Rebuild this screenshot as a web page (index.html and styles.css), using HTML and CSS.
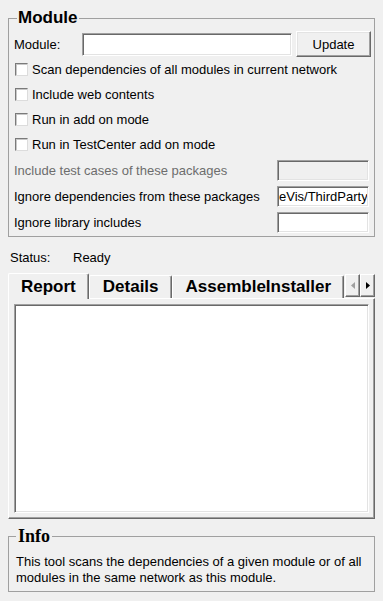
FILE: index.html
```html
<!DOCTYPE html>
<html lang="en">
<head>
  <meta charset="UTF-8">
  <title>Module Dependencies</title>
  <link rel="stylesheet" href="styles.css">
</head>
<body>
  <div class="panel">
    <fieldset class="group module-group">
      <legend>Module</legend>

      <div class="module-row">
        <label class="module-label" for="moduleName">Module:</label>
        <input class="field module-field" type="text" id="moduleName">
        <button class="btn">Update</button>
      </div>

      <label class="check-row"><span class="box"></span>Scan dependencies of all modules in current network</label>
      <label class="check-row"><span class="box"></span>Include web contents</label>
      <label class="check-row"><span class="box"></span>Run in add on mode</label>
      <label class="check-row"><span class="box"></span>Run in TestCenter add on mode</label>

      <div class="field-row disabled">
        <span>Include test cases of these packages</span>
        <input class="field small-field" type="text" disabled>
      </div>
      <div class="field-row">
        <span>Ignore dependencies from these packages</span>
        <input class="field small-field" type="text" value="eVis/ThirdParty">
      </div>
      <div class="field-row">
        <span>Ignore library includes</span>
        <input class="field small-field" type="text">
      </div>
    </fieldset>

    <div class="status">
      <span class="status-label">Status:</span>
      <span id="statusText">Ready</span>
    </div>

    <div class="tabs">
      <div class="tab-bar">
        <div class="tab-strip">
          <div class="tab active">Report</div>
          <div class="tab">Details</div>
          <div class="tab">AssembleInstaller</div>
        </div>
        <div class="tab-scroll">
          <span class="arrow-btn">
            <svg width="4" height="7" viewBox="0 0 4 7"><path d="M4 0 L0 3.5 L4 7 Z" fill="#a0a0a0"/></svg>
          </span>
          <span class="arrow-btn">
            <svg width="4" height="7" viewBox="0 0 4 7"><path d="M0 0 L4 3.5 L0 7 Z" fill="#000"/></svg>
          </span>
        </div>
      </div>
      <div class="tab-pane">
        <div class="report"></div>
      </div>
    </div>

    <fieldset class="group info-group">
      <legend>Info</legend>
      <p>This tool scans the dependencies of a given module or of all modules in the same network as this module.</p>
    </fieldset>
  </div>
</body>
</html>
```

FILE: styles.css
```css
body {
  margin: 0;
  background: #f0f0f0;
  font-family: "Liberation Sans", Arial, sans-serif;
  font-size: 13px;
  color: #000;
}

.panel {
  padding: 8px 8px 0 8px;
}

.group {
  margin: 0;
  min-width: 0;
  border: 1px solid #a0a0a0;
  padding: 3px 3px 1px 5px;
}

.group legend {
  font-weight: bold;
  font-size: 17px;
  line-height: 20px;
  padding: 0 1px;
  margin-left: 3px;
}

.field {
  box-sizing: border-box;
  margin: 0;
  padding: 0 2px;
  font-family: inherit;
  font-size: 13px;
  color: #000;
  background: #fff;
  border: 1px solid;
  border-color: #a0a0a0 #fff #fff #a0a0a0;
  box-shadow: inset 1px 1px #696969, inset -1px -1px #e3e3e3;
  outline: none;
}

.field:disabled {
  background: #f0f0f0;
}

.module-row {
  display: flex;
  align-items: center;
  height: 26px;
}

.module-label {
  width: 68px;
}

.module-field {
  width: 210px;
  height: 23px;
}

.btn {
  box-sizing: border-box;
  width: 75px;
  height: 26px;
  margin-left: 4px;
  font-family: inherit;
  font-size: 13px;
  color: #000;
  background: #f0f0f0;
  border: 1px solid;
  border-color: #fff #696969 #696969 #fff;
  box-shadow: inset -1px -1px #a0a0a0, inset 1px 1px #e3e3e3;
}

.check-row {
  display: flex;
  align-items: center;
  height: 25px;
}

.box {
  box-sizing: border-box;
  width: 13px;
  height: 13px;
  margin-left: 1px;
  margin-right: 4px;
  background: #fff;
  border: 1px solid;
  border-color: #7a7a7a #dcdcdc #dcdcdc #7a7a7a;
  box-shadow: inset 1px 1px #c8c8c8;
}

.field-row {
  display: flex;
  align-items: center;
  justify-content: space-between;
  height: 26px;
}

.field-row.disabled span {
  color: #6d6d6d;
}

.small-field {
  width: 92px;
  height: 21px;
  margin-right: 2px;
  padding: 0 1px;
}

.status {
  display: flex;
  align-items: center;
  height: 20px;
  margin-top: 10px;
  padding-left: 2px;
}

.status-label {
  width: 63px;
}

.tabs {
  margin-top: 6px;
}

.tab-bar {
  display: flex;
  align-items: flex-end;
  height: 25px;
}

.tab-strip {
  display: flex;
  align-items: flex-end;
  flex: 1;
  height: 26px;
  margin-bottom: -1px;
  overflow: hidden;
  position: relative;
  z-index: 1;
}

.tab {
  box-sizing: border-box;
  flex: none;
  height: 23px;
  margin-bottom: 1px;
  padding: 0 12px 0 13px;
  font-weight: bold;
  font-size: 17px;
  line-height: 22px;
  white-space: nowrap;
  border-top: 1px solid #fff;
  border-left: 1px solid #fff;
  border-right: 1px solid #696969;
  border-radius: 2px 2px 0 0;
  box-shadow: inset -1px 0 #a0a0a0;
}

.tab.active {
  height: 26px;
  margin-bottom: 0;
  padding-left: 12px;
  line-height: 26px;
  background: #f0f0f0;
}

.tab-scroll {
  display: flex;
  align-self: flex-end;
  margin-bottom: 1px;
}

.arrow-btn {
  box-sizing: border-box;
  display: flex;
  align-items: center;
  justify-content: center;
  width: 15px;
  height: 23px;
  background: #f0f0f0;
  border: 1px solid;
  border-color: #fff #696969 #696969 #fff;
  box-shadow: inset -1px -1px #a0a0a0;
}

.tab-pane {
  padding: 5px;
  border: 1px solid;
  border-color: #fff #696969 #696969 #fff;
  box-shadow: inset -1px -1px #a0a0a0;
}

.report {
  box-sizing: border-box;
  height: 209px;
  background: #fff;
  border: 1px solid;
  border-color: #a0a0a0 #fff #fff #a0a0a0;
  box-shadow: inset 1px 1px #696969, inset -1px -1px #e3e3e3;
}

.info-group {
  margin-top: 7px;
  padding: 0 3px 5px 7px;
}

.info-group legend {
  font-family: "Liberation Serif", "Times New Roman", serif;
  font-size: 18px;
  padding: 0 2px;
  margin-left: 0;
}

.info-group p {
  margin: 8px 0 0 0;
  line-height: 16px;
}
```
